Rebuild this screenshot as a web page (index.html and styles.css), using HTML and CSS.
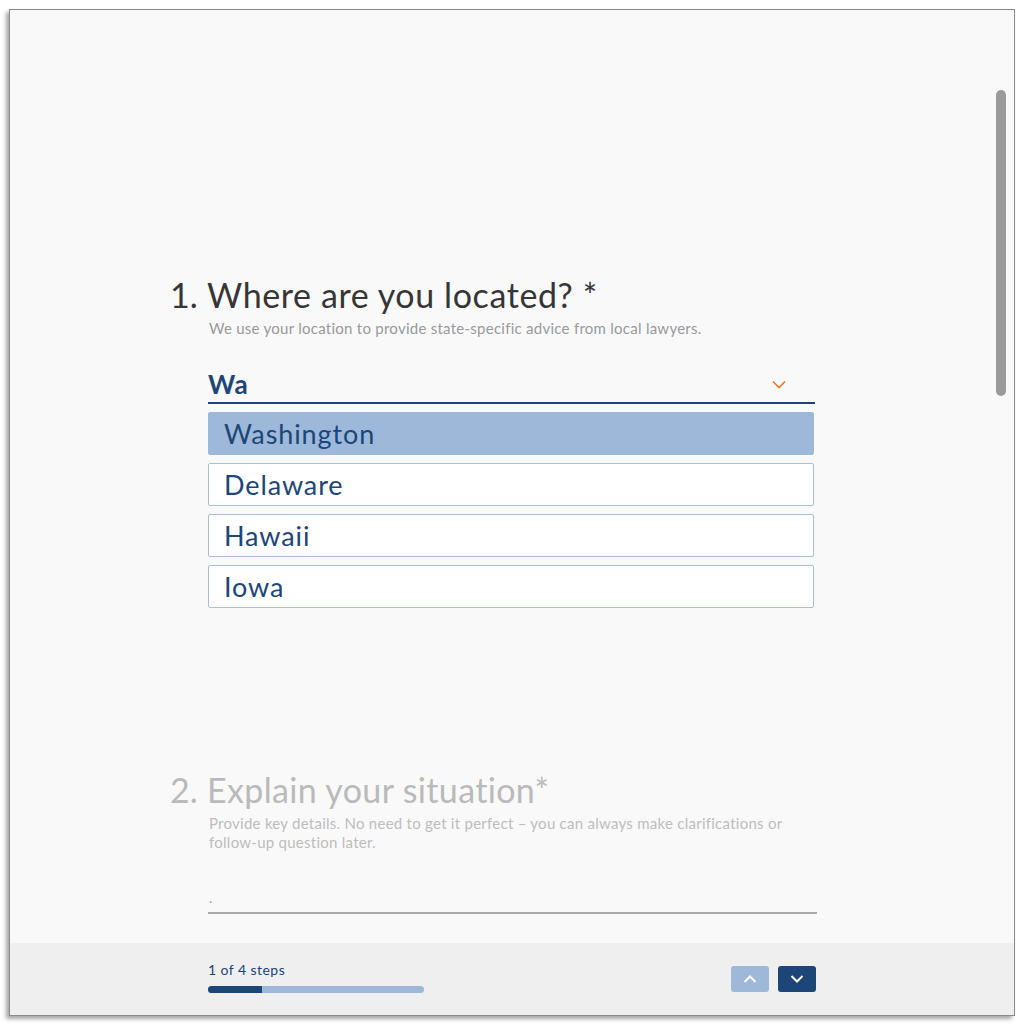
FILE: index.html
```html
<!DOCTYPE html>
<html lang="en">
<head>
<meta charset="utf-8">
<title>Get advice</title>
<link rel="stylesheet" href="styles.css">
</head>
<body>
<div class="window">
  <div class="content">
    <section class="question q1">
      <h2 class="q-title"><span class="q-num">1.</span><span>Where are you located? *</span></h2>
      <p class="q-help">We use your location to provide state-specific advice from local lawyers.</p>
      <div class="combo">
        <span class="combo-value">Wa</span>
        <svg class="combo-chevron" width="16" height="12" viewBox="0 0 16 12"><path d="M2 3.5 L8 9.5 L14 3.5" fill="none" stroke="#ea7a24" stroke-width="1.6"/></svg>
      </div>
      <ul class="options">
        <li class="option active">Washington</li>
        <li class="option">Delaware</li>
        <li class="option">Hawaii</li>
        <li class="option">Iowa</li>
      </ul>
    </section>
    <section class="question q2">
      <h2 class="q-title"><span class="q-num">2.</span><span>Explain your situation*</span></h2>
      <p class="q-help">Provide key details. No need to get it perfect – you can always make clarifications or follow-up question later.</p>
      <div class="textline"><span class="dot">.</span></div>
    </section>
  </div>
  <div class="scroll-thumb"></div>
  <footer class="footer">
    <div class="progress">
      <div class="progress-label">1 of 4 steps</div>
      <div class="progress-track"><div class="progress-fill" style="width:25%"></div></div>
    </div>
    <div class="nav">
      <button class="nav-btn up"><svg width="14" height="10" viewBox="0 0 14 10"><path d="M1.5 8 L7 2.5 L12.5 8" fill="none" stroke="#fff" stroke-width="2"/></svg></button>
      <button class="nav-btn down"><svg width="14" height="10" viewBox="0 0 14 10"><path d="M1.5 2 L7 7.5 L12.5 2" fill="none" stroke="#fff" stroke-width="2"/></svg></button>
    </div>
  </footer>
</div>
</body>
</html>
```

FILE: styles.css
```css
* { box-sizing: border-box; }
html, body { margin: 0; padding: 0; background: #ffffff; }
body {
  font-family: Lato, "Open Sans", Arial, sans-serif;
  width: 1024px;
  height: 1024px;
  overflow: hidden;
}
.window {
  position: relative;
  margin: 9px 0 0 9px;
  width: 1006px;
  height: 1007px;
  border: 1px solid #8a8a8a;
  background: #f9f9f9;
  box-shadow: -3px 3px 4px rgba(0,0,0,0.35);
  display: flex;
  flex-direction: column;
  overflow: hidden;
}
.content {
  flex: 1;
  padding: 265px 0 0 198px;
  overflow: hidden;
}
.question { width: 607px; }
.q-title {
  margin: 0 0 0 -38px;
  display: flex;
  font-weight: 400;
  font-size: 34px;
  line-height: 40px;
  letter-spacing: 0.6px;
  color: #363636;
}
.q-num { width: 37px; letter-spacing: 0; }
.q-help {
  margin: 4px 0 0 1px;
  font-size: 15px;
  line-height: 19px;
  letter-spacing: 0.26px;
  color: #9a9a9a;
}
.combo {
  margin-top: 31px;
  height: 35px;
  border-bottom: 2px solid #1c4578;
  display: flex;
  align-items: flex-start;
  justify-content: space-between;
  padding-right: 28px;
}
.combo-value {
  font-size: 26px;
  font-weight: 700;
  line-height: 30px;
  letter-spacing: 0.8px;
  color: #1c4578;
}
.combo-chevron { margin-top: 9px; }
.options {
  list-style: none;
  margin: 8px 0 0 0;
  padding: 0;
  width: 606px;
  display: flex;
  flex-direction: column;
  gap: 8px;
}
.option {
  height: 43px;
  padding: 0 15px;
  border: 1px solid #a8c0dc;
  border-radius: 2px;
  background: #ffffff;
  font-size: 27px;
  line-height: 41px;
  letter-spacing: 0.9px;
  color: #1c4578;
}
.option.active {
  background: #9db8d8;
  border-color: #9db8d8;
}
.q2 { margin-top: 162px; }
.q2 .q-title { color: #bababa; letter-spacing: 0.35px; }
.q2 .q-help { color: #bdbdbd; }
.textline {
  margin-top: 38px;
  width: 609px;
  height: 24px;
  border-bottom: 2px solid #aaaaaa;
  font-size: 14px;
  color: #999;
  line-height: 16px;
}
.dot { padding-left: 1px; }
.scroll-thumb {
  position: absolute;
  left: 986px;
  top: 80px;
  width: 10px;
  height: 306px;
  border-radius: 5px;
  background: #9a9a9a;
}
.footer {
  height: 72px;
  flex: none;
  background: #efefef;
  padding: 0 198px;
  display: flex;
  justify-content: space-between;
  align-items: flex-start;
}
.progress { padding-top: 18px; }
.progress-label {
  font-size: 14px;
  line-height: 18px;
  letter-spacing: 0.45px;
  color: #1c4578;
}
.progress-track {
  margin-top: 7px;
  width: 216px;
  height: 7px;
  border-radius: 4px;
  background: #9db8d8;
  overflow: hidden;
}
.progress-fill {
  height: 100%;
  background: #1c4578;
}
.nav {
  padding-top: 23px;
  display: flex;
  gap: 9px;
}
.nav-btn {
  width: 38px;
  height: 26px;
  border: none;
  border-radius: 3px;
  padding: 0;
  display: flex;
  align-items: center;
  justify-content: center;
}
.nav-btn.up { background: #9db8d8; }
.nav-btn.down { background: #1c4578; }
```
